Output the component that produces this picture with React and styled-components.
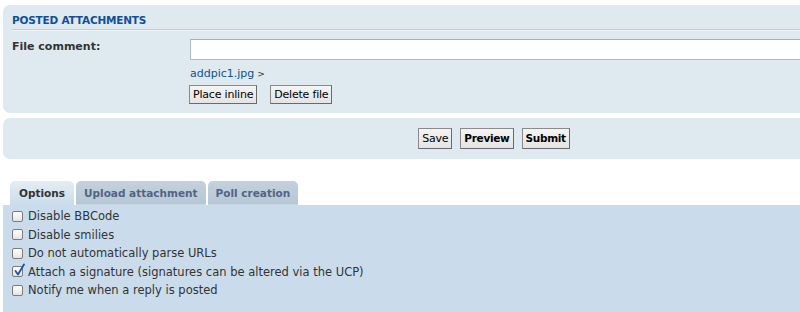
import React from 'react';
import styled, { createGlobalStyle } from 'styled-components';

const GlobalStyle = createGlobalStyle`
  html, body {
    margin: 0;
    padding: 0;
    background: #ffffff;
    overflow: hidden;
  }
  body {
    font-family: "DejaVu Sans", Verdana, sans-serif;
    font-size: 11px;
    color: #333333;
  }
`;

const Page = styled.div`
  width: 980px;
  padding: 5px 0 0 3px;
  box-sizing: border-box;
`;

const Panel = styled.div`
  background-color: #dfe9f0;
  border-radius: 7px;
  height: ${({ h }) => h}px;
  box-sizing: border-box;
  margin-top: ${({ mt }) => mt || 0}px;
`;

const AttachPanel = styled(Panel)`
  padding: 9px 10px 0 9px;
`;

const Heading = styled.h3`
  margin: 0;
  font-size: 10.5px;
  font-weight: bold;
  text-transform: uppercase;
  color: #115098;
  letter-spacing: -0.2px;
  line-height: 13px;
  padding-bottom: 2px;
  border-bottom: 1px solid #c3ccd4;
  box-shadow: 0 1px 0 #eef4f8;
`;

const FieldRow = styled.div`
  display: flex;
  margin-top: 9px;
`;

const Label = styled.div`
  width: 178px;
  font-weight: bold;
  color: #333333;
  padding-top: 1px;
  flex-shrink: 0;
`;

const Field = styled.div`
  flex: 1;
  display: flex;
  flex-direction: column;
`;

const TextInput = styled.input`
  height: 21px;
  box-sizing: border-box;
  border: 1px solid #b4bac0;
  border-top-color: #a8aeb4;
  background: #ffffff;
  margin: 0;
  padding: 0 3px;
  width: 100%;
`;

const FileName = styled.div`
  margin-top: 7px;
  color: #105289;
  font-size: 11px;
  line-height: 13px;

  span {
    color: #333333;
    font-size: 9px;
    margin-left: 3px;
  }
`;

const ButtonRow = styled.div`
  display: flex;
  gap: ${({ gap }) => gap}px;
  margin-top: ${({ mt }) => mt || 0}px;
  margin-left: ${({ ml }) => ml || 0}px;
  justify-content: ${({ center }) => (center ? 'center' : 'flex-start')};
  width: ${({ center }) => (center ? '100%' : 'auto')};
`;

const Button = styled.button`
  font-family: "DejaVu Sans", Verdana, sans-serif;
  font-size: ${({ bold }) => (bold ? '10.5px' : '11px')};
  font-weight: ${({ bold }) => (bold ? 'bold' : 'normal')};
  letter-spacing: ${({ bold }) => (bold ? '-0.3px' : '-0.2px')};
  color: #000000;
  background: linear-gradient(#f4f4f4, #e4e4e4);
  border: 1px solid #6f6f6f;
  border-color: #8a8a8a #6a6a6a #6a6a6a #8a8a8a;
  height: ${({ h }) => h}px;
  padding: 0 ${({ px }) => px}px;
  margin: 0;
  border-radius: 0;
  line-height: 1;
`;

const SubmitPanel = styled(Panel)`
  display: flex;
  align-items: center;
  padding: 0 0 1px 5px;
`;

const TabBar = styled.div`
  display: flex;
  gap: 2px;
  margin-top: 22px;
  padding-left: 7px;
  height: 24px;
  align-items: flex-end;
`;

const Tab = styled.div`
  height: 24px;
  box-sizing: border-box;
  padding: 0 ${({ px }) => px}px;
  display: flex;
  align-items: center;
  font-weight: bold;
  font-size: 10.5px;
  border-radius: 5px 5px 0 0;
  color: ${({ active }) => (active ? '#333333' : '#536482')};
  background: ${({ active }) => (active
    ? 'linear-gradient(#e4edf4, #cadceb)'
    : 'linear-gradient(#c3d1dd, #b6c7d5)')};
  box-shadow: ${({ active }) => (active ? 'none' : 'inset 0 -1px 0 #c6d5e2')};
`;

const OptionsPanel = styled.div`
  background-color: #cadceb;
  height: 120px;
  padding: 2px 0 0 9px;
  box-sizing: border-box;
`;

const OptionRow = styled.label`
  display: flex;
  align-items: center;
  height: 18.5px;
  color: #333333;
  font-size: 11.5px;
`;

const Box = styled.span`
  width: 11px;
  height: 11px;
  box-sizing: border-box;
  border: 1px solid #7b7b7b;
  border-radius: 2px;
  background: linear-gradient(#ffffff, #e4e4e4);
  margin-right: 5px;
  position: relative;
  flex-shrink: 0;

  svg {
    position: absolute;
    left: 0;
    top: -4px;
  }
`;

const Check = () => (
  <svg width="13" height="14" viewBox="0 0 13 14">
    <path d="M2.5 8 L5 11.5 L11 1.5" fill="none" stroke="#2558a0" strokeWidth="1.9" strokeLinecap="round" strokeLinejoin="round" />
  </svg>
);

const options = [
  { text: 'Disable BBCode', checked: false },
  { text: 'Disable smilies', checked: false },
  { text: 'Do not automatically parse URLs', checked: false },
  { text: 'Attach a signature (signatures can be altered via the UCP)', checked: true },
  { text: 'Notify me when a reply is posted', checked: false },
];

const App = () => (
  <>
    <GlobalStyle />
    <Page>
      <AttachPanel h={108}>
        <Heading>Posted attachments</Heading>
        <FieldRow>
          <Label>File comment:</Label>
          <Field>
            <TextInput type="text" />
            <FileName>
              addpic1.jpg
              <span>&gt;</span>
            </FileName>
            <ButtonRow gap={13} mt={4} ml={-1}>
              <Button h={19} px={3}>Place inline</Button>
              <Button h={19} px={3}>Delete file</Button>
            </ButtonRow>
          </Field>
        </FieldRow>
      </AttachPanel>

      <SubmitPanel h={41} mt={5}>
        <ButtonRow gap={8} center>
          <Button h={21} px={3}>Save</Button>
          <Button h={21} px={3} bold>Preview</Button>
          <Button h={21} px={3} bold>Submit</Button>
        </ButtonRow>
      </SubmitPanel>

      <TabBar>
        <Tab active px={9}>Options</Tab>
        <Tab px={8}>Upload attachment</Tab>
        <Tab px={8}>Poll creation</Tab>
      </TabBar>
      <OptionsPanel>
        {options.map((o) => (
          <OptionRow key={o.text}>
            <Box>{o.checked ? <Check /> : null}</Box>
            {o.text}
          </OptionRow>
        ))}
      </OptionsPanel>
    </Page>
  </>
);

export default App;
